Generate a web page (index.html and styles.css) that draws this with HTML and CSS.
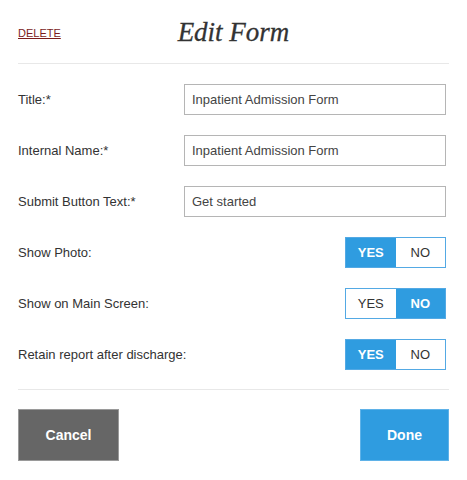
FILE: index.html
```html
<!DOCTYPE html>
<html>
<head>
<meta charset="utf-8">
<link rel="stylesheet" href="styles.css">
</head>
<body>
<div class="page">
  <header class="header">
    <a class="delete" href="#">DELETE</a>
    <h1 class="title">Edit Form</h1>
    <span></span>
  </header>
  <div class="fields">
    <div class="row">
      <label class="label">Title:*</label>
      <input class="input" type="text" value="Inpatient Admission Form">
    </div>
    <div class="row">
      <label class="label">Internal Name:*</label>
      <input class="input" type="text" value="Inpatient Admission Form">
    </div>
    <div class="row">
      <label class="label">Submit Button Text:*</label>
      <input class="input" type="text" value="Get started">
    </div>
    <div class="row">
      <span class="label">Show Photo:</span>
      <div class="toggle"><span class="opt on">YES</span><span class="opt">NO</span></div>
    </div>
    <div class="row">
      <span class="label">Show on Main Screen:</span>
      <div class="toggle"><span class="opt">YES</span><span class="opt on">NO</span></div>
    </div>
    <div class="row">
      <span class="label">Retain report after discharge:</span>
      <div class="toggle"><span class="opt on">YES</span><span class="opt">NO</span></div>
    </div>
  </div>
  <div class="actions">
    <button class="btn cancel">Cancel</button>
    <button class="btn done">Done</button>
  </div>
</div>
</body>
</html>
```
FILE: styles.css
```css
* { box-sizing: border-box; }
html, body { margin: 0; padding: 0; background: #fff; }
body { font-family: "Liberation Sans", Arial, sans-serif; color: #333; }
.page { padding: 0 18px; }
.header {
  display: grid;
  grid-template-columns: 1fr auto 1fr;
  align-items: center;
  height: 64px;
  padding-top: 2px;
  border-bottom: 1px solid #e8e8e8;
}
.delete {
  font-size: 11px;
  color: #7b1c1c;
  text-decoration: underline;
  justify-self: start;
}
.title {
  margin: 0;
  font-family: "Liberation Serif", "DejaVu Serif", serif;
  font-style: italic;
  font-weight: normal;
  font-size: 27px;
  color: #333;
  -webkit-text-stroke: 0.3px #333;
}
.fields {
  display: flex;
  flex-direction: column;
  gap: 20px;
  padding: 20px 0 19px;
  border-bottom: 1px solid #e8e8e8;
}
.row {
  display: flex;
  justify-content: space-between;
  align-items: center;
  height: 31px;
  padding-right: 3px;
}
.label { font-size: 13px; color: #333; white-space: nowrap; }
.input {
  height: 31px;
  width: 262px;
  border: 1px solid #b5b5b5;
  padding: 0 7px;
  font-family: "Liberation Sans", Arial, sans-serif;
  font-size: 13px;
  color: #444;
  background: #fff;
  outline: none;
}
.toggle {
  display: flex;
  width: 101px;
  height: 31px;
  border: 1px solid #53a9e4;
}
.opt {
  flex: 1;
  display: flex;
  align-items: center;
  justify-content: center;
  font-size: 13px;
  color: #333;
  background: #fff;
}
.opt.on { background: #2f9ce0; color: #fff; font-weight: bold; }
.actions {
  display: flex;
  justify-content: space-between;
  padding-top: 19px;
}
.btn {
  height: 52px;
  border: 1px solid #9a9a9a;
  font-family: "Liberation Sans", Arial, sans-serif;
  font-size: 14px;
  font-weight: bold;
  color: #fff;
  cursor: pointer;
}
.cancel { width: 101px; background: #666; }
.done { width: 89px; background: #2f9ce0; border-color: #5fb2e8; }
```
